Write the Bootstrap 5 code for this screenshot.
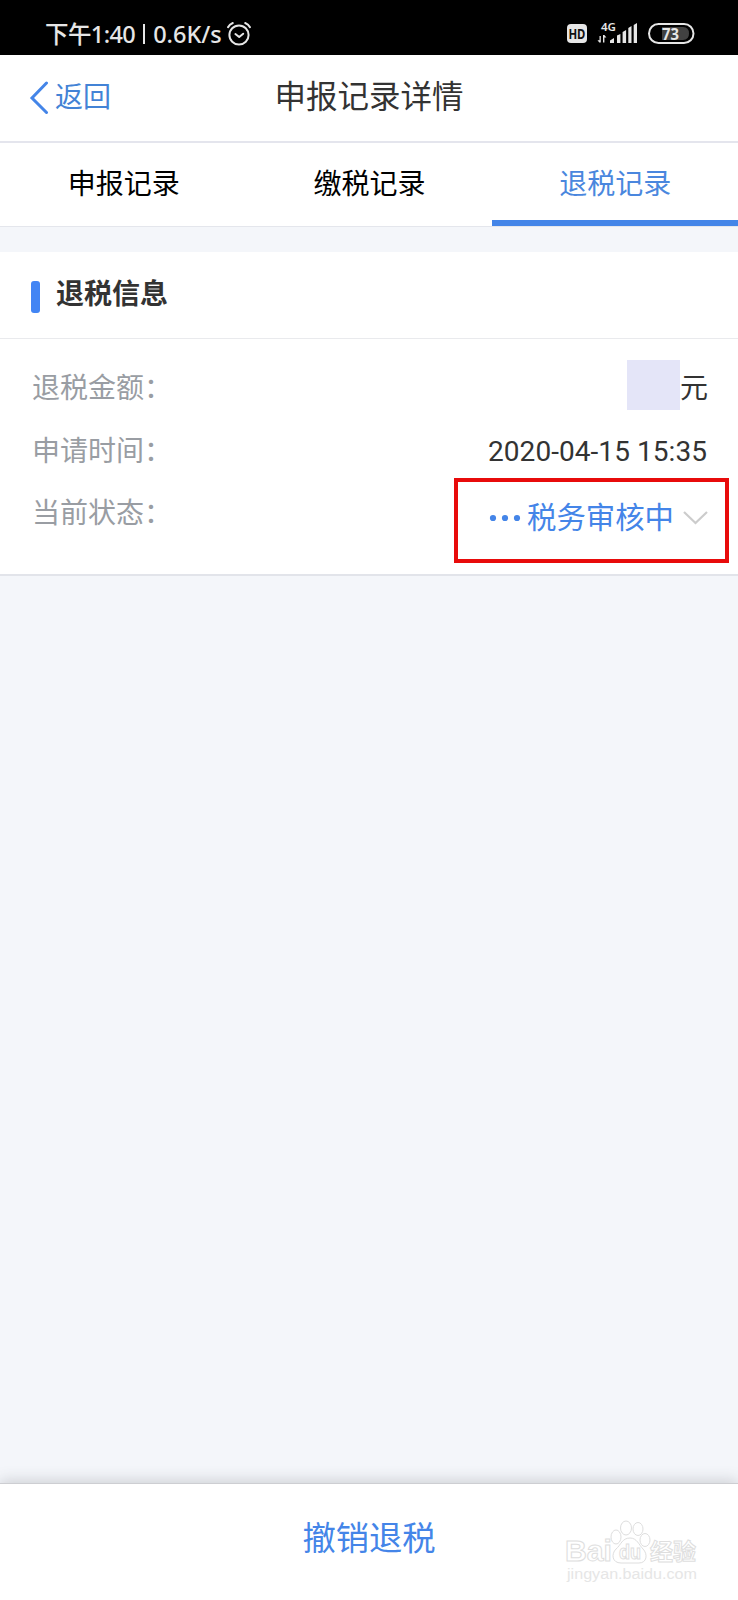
<!DOCTYPE html>
<html lang="zh-CN">
<head>
<meta charset="utf-8">
<meta name="viewport" content="width=device-width, initial-scale=1">
<title>申报记录详情</title>
<link href="https://cdn.jsdelivr.net/npm/bootstrap@5.3.0/dist/css/bootstrap.min.css" rel="stylesheet">
<style>
body{font-family:Roboto,"Noto Sans CJK SC",sans-serif;font-size:28px;line-height:40px;color:#333;background:#f4f6fa}
.screen{height:1600px;overflow:hidden}
.statusbar{height:55px;background:#000;color:#e6e6e6;padding:12px 43px 0 45px;font:500 23.5px/42px "Noto Sans","Noto Sans CJK SC",sans-serif}
.clock{letter-spacing:-.6px}
.clock-sep{width:2px;height:20px;background:#e6e6e6;margin:0 8px 0 8px}
.titlebar{height:88px;border-bottom:2px solid #e4e5ed;display:grid;grid-template-columns:1fr auto 1fr;align-items:center;padding:0 29px 0}
.titlebar h1{font-size:31.5px;line-height:44px;color:#333}
.back-link{color:#4383d6}
.back-link span{margin-left:6px}
.tabs{height:84px;border-bottom:1px solid #e4e6ec;padding-left:1px}
.tabs .nav-link{height:83px;color:#000;line-height:40px;padding:22px 0 0;border-radius:0;border-bottom:6px solid transparent}
.tabs .nav-link.active{color:#4a87de;border-bottom-color:#4485e8}
.refund{margin-top:25px;height:324px;border-bottom:2px solid #e2e4ea}
.section-head{height:87px;border-bottom:1px solid #e9eaed;padding:0 31px}
.bar-mark{width:9px;height:32px;border-radius:3px;background:#4285f4;margin-top:29px}
.section-head h2{font-size:28px;line-height:40px;margin:23px 0 0 16px;color:#333}
.info-list{padding:19px 30px 0 32px}
.info-row{height:62.5px;line-height:62px}
.info-row dt{font-weight:400;color:#999da3}
.info-row .stamp{margin-right:1px;letter-spacing:.06px}
.masked{width:53px;height:50px;margin-top:2px;background:#e4e5f8}
.state{color:#4485e8;font-size:29.4px}
.highlight{position:absolute;right:-21px;top:-5px;width:275px;height:85px;border:4px solid #e80b0b}
.footer-bar{height:117px;box-shadow:0 -2px 14px rgba(60,65,75,.22);border-top:1px solid #cdced2;padding-top:31px}
.footer-bar .btn{font-size:33.3px;line-height:48px;color:#4485e8}
.watermark{position:absolute;left:560px;top:32px}
</style>
</head>
<body>
<div class="screen d-flex flex-column">
  <div class="statusbar d-flex justify-content-between flex-shrink-0">
    <div class="d-flex align-items-center">
      <span class="clock text-nowrap">下午1:40</span>
      <span class="clock-sep"></span>
      <span class="text-nowrap">0.6K/s</span>
      <svg class="ms-1" width="26" height="26" viewBox="0 0 26 26" fill="none" stroke="#e6e6e6" stroke-width="2" stroke-linecap="round" stroke-linejoin="round"><circle cx="13" cy="14" r="9.6"/><path d="M9.4 13l3.8 3 4-3.3M2 6.2Q3.5 3.3 6.8 2M24 6.2Q22.500 3.3 19.200 2"/></svg>
    </div>
    <svg width="130" height="42" viewBox="565 12 130 42" font-family="Noto Sans, sans-serif" fill="#e6e6e6">
      <rect x="567" y="24" width="20" height="19" rx="4"/>
      <text x="568.400" y="38.500" font-size="13.500" font-weight="700" fill="#111" textLength="17" lengthAdjust="spacingAndGlyphs">HD</text>
      <text x="601" y="30.500" font-size="11" font-weight="600" textLength="15" lengthAdjust="spacingAndGlyphs">4G</text>
      <path d="M600.800 36v6.500h-1.500l-1.800-2.300h2V36zM603 42.500V35h1.400l2 2.500h-2v5z"/>
      <path d="M610 43v-2.500l4-2.500v5zM617 43v-7.500l3.400-1.500v9zM622.600 43V32l3.500-2v13zM628.300 43V28l3.200-2v17zM633.700 43V25l3.300-2v20z"/>
      <rect x="649" y="24" width="44.500" height="19" rx="9.500" fill="none" stroke="#e6e6e6" stroke-width="2"/>
      <path d="M662 27h21q6 0 6 6.500t-6 6.500h-21z" fill="#414141"/>
      <text x="662" y="39.500" font-size="16.500" font-weight="700" textLength="17" lengthAdjust="spacingAndGlyphs">73</text>
    </svg>
  </div>

  <header class="titlebar bg-white flex-shrink-0">
    <a href="#" class="back-link d-flex align-items-center text-decoration-none">
      <svg width="20" height="34" viewBox="0 1 20 34" fill="none" stroke="#4485e8" stroke-width="3" stroke-linecap="round"><path d="M17.500 3L3 18l14.500 14.500"/></svg>
      <span>返回</span>
    </a>
    <h1 class="m-0 fw-normal">申报记录详情</h1>
  </header>

  <nav class="tabs nav nav-fill bg-white flex-shrink-0">
    <a class="nav-link col-4" href="#">申报记录</a>
    <a class="nav-link col-4" href="#">缴税记录</a>
    <a class="nav-link col-4 active" href="#">退税记录</a>
  </nav>

  <section class="refund bg-white flex-shrink-0">
    <div class="section-head d-flex align-items-start">
      <span class="bar-mark"></span>
      <h2 class="fw-bold">退税信息</h2>
    </div>
    <dl class="info-list mb-0">
      <div class="info-row d-flex justify-content-between">
        <dt>退税金额：</dt>
        <dd class="m-0 d-flex"><span class="masked"></span>元</dd>
      </div>
      <div class="info-row d-flex justify-content-between">
        <dt>申请时间：</dt>
        <dd class="stamp mb-0">2020-04-15 15:35</dd>
      </div>
      <div class="info-row d-flex justify-content-between position-relative">
        <dt>当前状态：</dt>
        <dd class="state m-0 d-flex align-items-center pt-2">
          <svg class="me-1" width="35" height="8" viewBox="0 0 35 8" fill="#4485e8"><circle cx="5" cy="4" r="3.100"/><circle cx="17" cy="4" r="3.100"/><circle cx="29" cy="4" r="3.100"/></svg>
          <span>税务审核中</span>
          <svg class="ms-2" width="26" height="16" viewBox="0 0 26 16" fill="none" stroke="#ccc" stroke-width="2.200"><path d="M2 2l11.500 11L25 2"/></svg>
        </dd>
        <span class="highlight"></span>
      </div>
    </dl>
  </section>

  <footer class="footer-bar bg-white mt-auto flex-shrink-0 text-center position-relative">
    <button class="btn p-0 border-0" type="button">撤销退税</button>
    <svg class="watermark" width="150" height="70" viewBox="560 1515 150 70" fill="#fff" stroke="#dedede" stroke-width="1" font-family="Liberation Sans, Noto Sans CJK SC, sans-serif">
      <text x="565" y="1560" font-size="29" font-weight="700" textLength="47" lengthAdjust="spacingAndGlyphs">Bai</text>
      <ellipse cx="616" cy="1536" rx="5" ry="7"/><ellipse cx="626" cy="1527" rx="5.500" ry="7"/><ellipse cx="638" cy="1528" rx="5" ry="6.500"/><ellipse cx="645" cy="1539" rx="5" ry="6.500"/>
      <path d="M630 1537c7 0 9 7 13 11 5 5 4 14-4 14H621c-9 0-10-9-5-14 5-4 6-11 14-11z"/>
      <text x="619" y="1558" font-size="20" font-weight="700" textLength="22" lengthAdjust="spacingAndGlyphs">du</text>
      <text x="650" y="1559" font-size="23" font-weight="700" textLength="46" lengthAdjust="spacingAndGlyphs">经验</text>
      <text x="567" y="1578" font-size="15.500" stroke="none" fill="#e6e6e6" textLength="130" lengthAdjust="spacingAndGlyphs">jingyan.baidu.com</text>
    </svg>
  </footer>
</div>
<script src="https://cdn.jsdelivr.net/npm/bootstrap@5.3.0/dist/js/bootstrap.bundle.min.js"></script>
</body>
</html>
